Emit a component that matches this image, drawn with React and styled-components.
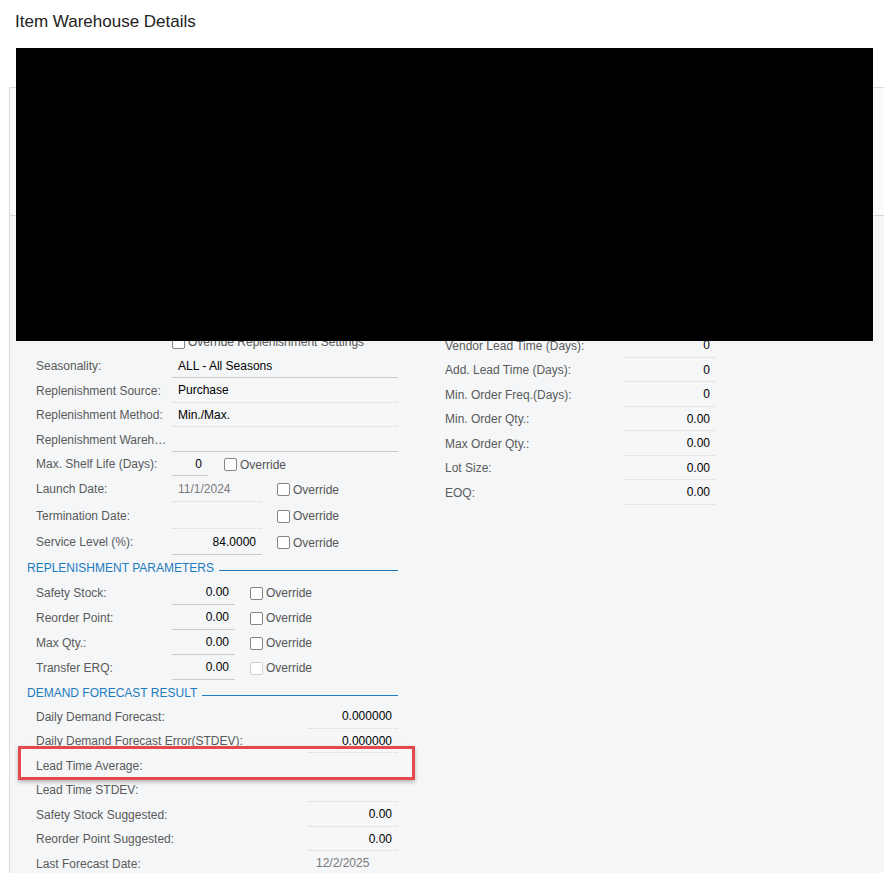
import React from 'react'
import styled, { createGlobalStyle } from 'styled-components'

const GlobalStyle = createGlobalStyle`
  html, body {
    margin: 0;
    padding: 0;
    background: #ffffff;
  }
  body {
    font-family: "Liberation Sans", Arial, sans-serif;
    color: #222;
  }
`

const Page = styled.div`
  position: relative;
  width: 884px;
  height: 873px;
  overflow: hidden;
  background: #fff;
`

const Title = styled.h1`
  margin: 0;
  padding: 12px 15px 0;
  font-size: 17px;
  line-height: 20px;
  font-weight: 400;
  color: #222;
`

const Toolbar = styled.div`
  height: 55px;
`

const Panel = styled.div`
  margin-left: 9px;
  border-left: 1px solid #d8dbde;
  border-top: 1px solid #dcdcdc;
  background: #f4f6f8;
  height: 800px;
`

const Summary = styled.div`
  height: 127px;
  background: #fafafa;
  border-bottom: 1px solid #d6d6d6;
`

const Columns = styled.div`
  display: flex;
  align-items: flex-start;
`

const LeftCol = styled.div`
  width: 371px;
  margin-left: 17px;
  padding-top: 114px;
`

const RightCol = styled.div`
  width: 270px;
  margin-left: 47px;
  padding-top: 118px;
`

const Row = styled.div`
  position: relative;
  display: flex;
  align-items: stretch;
  height: ${p => p.$h || 24.5}px;
  padding-left: ${p => (p.$flush ? 0 : 9)}px;
  ${p =>
    p.$highlight &&
    `
    &::after {
      content: '';
      position: absolute;
      left: -9px;
      right: -17px;
      top: -8px;
      bottom: -1px;
      border: 3px solid #e5484d;
      box-shadow: 0 2px 4px rgba(0, 0, 0, 0.28);
      pointer-events: none;
    }
  `}
`

const Label = styled.div`
  align-self: center;
  width: ${p => (p.$w ? `${p.$w}px` : 'auto')};
  flex: ${p => (p.$w ? '0 0 auto' : '1 1 auto')};
  font-size: 12px;
  line-height: 15px;
  color: #5a5a5a;
  white-space: nowrap;
  overflow: hidden;
  text-overflow: ellipsis;
`

const Field = styled.div`
  display: flex;
  align-items: center;
  justify-content: ${p => (p.$right ? 'flex-end' : 'flex-start')};
  width: ${p => p.$w}px;
  flex: 0 0 auto;
  box-sizing: border-box;
  padding: 0 ${p => p.$pr ?? 6}px 0 ${p => p.$pl ?? 6}px;
  margin-bottom: 1px;
  border-bottom: 1px ${p => (p.$solid ? 'solid #c9cbcd' : 'dotted #d2d4d6')};
  font-size: 12px;
  color: ${p => (p.$muted ? '#7a7a7a' : '#000')};
  white-space: nowrap;
`

const Check = styled.label`
  display: flex;
  align-items: center;
  gap: 3px;
  margin-left: ${p => p.$ml ?? 15}px;
  font-size: 12px;
  color: #555;
  white-space: nowrap;
`

const Box = styled.span`
  display: inline-block;
  width: 11px;
  height: 11px;
  border: 1px solid ${p => (p.$disabled ? '#cfd1d3' : '#858585')};
  border-radius: 2px;
  background: #fff;
`

const Section = styled.div`
  display: flex;
  align-items: center;
  height: ${p => p.$h || 24.5}px;
  font-size: 12px;
  color: #1d7bbf;
  text-transform: uppercase;
  white-space: nowrap;
  &::after {
    content: '';
    flex: 1;
    height: 1px;
    margin: 5px 0 0 5px;
    background: #1d7bbf;
  }
`

const Redaction = styled.div`
  position: absolute;
  left: 16px;
  top: 48px;
  width: 857px;
  height: 293px;
  background: #000;
`

const Override = ({ ml, disabled, text = 'Override' }) => (
  <Check $ml={ml}>
    <Box $disabled={disabled} />
    {text}
  </Check>
)

const forecast = [
  ['Daily Demand Forecast:', '0.000000'],
  ['Daily Demand Forecast Error(STDEV):', '0.000000'],
  ['Lead Time Average:', '', true],
  ['Lead Time STDEV:', ''],
  ['Safety Stock Suggested:', '0.00'],
  ['Reorder Point Suggested:', '0.00'],
]

const params = ['Safety Stock:', 'Reorder Point:', 'Max Qty.:', 'Transfer ERQ:']

const vendor = [
  ['Vendor Lead Time (Days):', '0'],
  ['Add. Lead Time (Days):', '0'],
  ['Min. Order Freq.(Days):', '0'],
  ['Min. Order Qty.:', '0.00'],
  ['Max Order Qty.:', '0.00'],
  ['Lot Size:', '0.00'],
  ['EOQ:', '0.00'],
]

export default function App() {
  return (
    <Page>
      <GlobalStyle />
      <Title>Item Warehouse Details</Title>
      <Toolbar />
      <Panel>
        <Summary />
        <Columns>
          <LeftCol>
            <Row>
              <Label $w={136} />
              <Override ml={0} text="Override Replenishment Settings" />
            </Row>
            <Row>
              <Label $w={136}>Seasonality:</Label>
              <Field $w={226} $solid>ALL - All Seasons</Field>
            </Row>
            <Row>
              <Label $w={136}>Replenishment Source:</Label>
              <Field $w={226}>Purchase</Field>
            </Row>
            <Row>
              <Label $w={136}>Replenishment Method:</Label>
              <Field $w={226}>Min./Max.</Field>
            </Row>
            <Row>
              <Label $w={136}>Replenishment Warehouse:</Label>
              <Field $w={226} $solid />
            </Row>
            <Row>
              <Label $w={136}>Max. Shelf Life (Days):</Label>
              <Field $w={36} $solid $right>0</Field>
              <Override ml={16} />
            </Row>
            <Row $h={25.5}>
              <Label $w={136}>Launch Date:</Label>
              <Field $w={90} $muted>11/1/2024</Field>
              <Override />
            </Row>
            <Row $h={27}>
              <Label $w={136}>Termination Date:</Label>
              <Field $w={90} />
              <Override />
            </Row>
            <Row $h={26.5}>
              <Label $w={136}>Service Level (%):</Label>
              <Field $w={90} $solid $right>84.0000</Field>
              <Override />
            </Row>

            <Section>Replenishment Parameters</Section>
            {params.map((p, i) => (
              <Row key={p} $h={25}>
                <Label $w={136}>{p}</Label>
                <Field $w={63} $solid $right>0.00</Field>
                <Override disabled={i === params.length - 1} />
              </Row>
            ))}

            <Section>Demand Forecast Result</Section>
            {forecast.map(([label, value, hl]) => (
              <Row key={label} $highlight={hl}>
                <Label>{label}</Label>
                <Field $w={90} $right>{value}</Field>
              </Row>
            ))}
            <Row>
              <Label>Last Forecast Date:</Label>
              <Field $w={90} $pl={8} $muted>12/2/2025</Field>
            </Row>
          </LeftCol>

          <RightCol>
            {vendor.map(([label, value]) => (
              <Row key={label} $flush>
                <Label $w={180}>{label}</Label>
                <Field $w={90} $right $pr={5}>{value}</Field>
              </Row>
            ))}
          </RightCol>
        </Columns>
      </Panel>
      <Redaction />
    </Page>
  )
}
